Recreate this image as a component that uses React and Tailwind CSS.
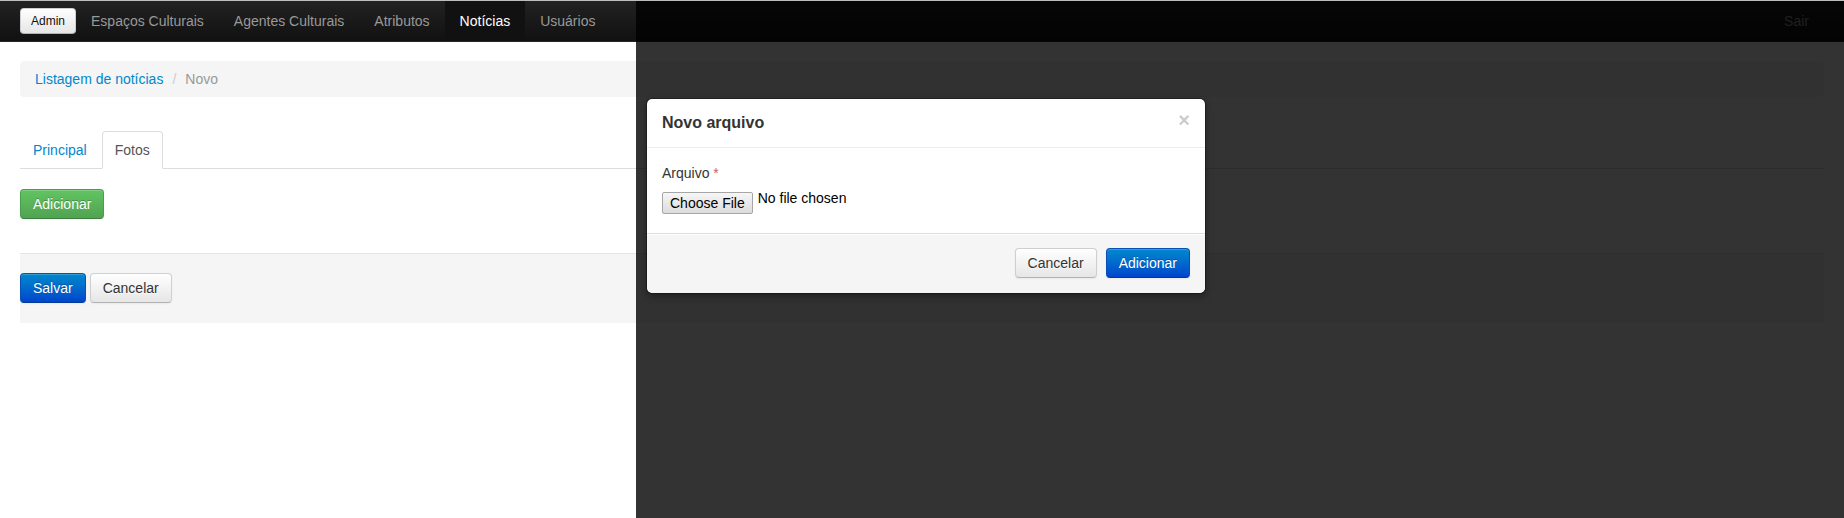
import React from 'react';

const btnBase =
  'inline-flex items-center justify-center h-[30px] px-3 rounded-[4px] border text-[14px] leading-5 cursor-pointer';

const variants = {
  default:
    'bg-linear-to-b from-white to-[#e6e6e6] border-[#cfcfcf] border-b-[#b3b3b3] text-[#333] shadow-[inset_0_1px_0_rgba(255,255,255,0.2),0_1px_2px_rgba(0,0,0,0.05)] [text-shadow:0_1px_1px_rgba(255,255,255,0.75)]',
  primary:
    'bg-linear-to-b from-[#0088cc] to-[#0044cc] border-[#0a4fb8] border-b-[#003a99] text-white shadow-[inset_0_1px_0_rgba(255,255,255,0.2),0_1px_2px_rgba(0,0,0,0.05)] [text-shadow:0_-1px_0_rgba(0,0,0,0.25)]',
  success:
    'bg-linear-to-b from-[#62c462] to-[#51a351] border-[#4d9c4d] border-b-[#3d7d3d] text-white shadow-[inset_0_1px_0_rgba(255,255,255,0.2),0_1px_2px_rgba(0,0,0,0.05)] [text-shadow:0_-1px_0_rgba(0,0,0,0.25)]',
};

const Btn = ({ variant = 'default', className = '', children }) => (
  <button type="button" className={`${btnBase} ${variants[variant]} ${className}`}>
    {children}
  </button>
);

const navItems = ['Espaços Culturais', 'Agentes Culturais', 'Atributos', 'Notícias', 'Usuários'];

const App = () => {
  return (
    <div className="relative h-[518px] overflow-hidden bg-white font-['Liberation_Sans',Arial,sans-serif] text-[14px] leading-5 text-[#333]">
      <div className="h-px bg-[#bdbdbd]" />

      {/* navbar */}
      <nav className="flex h-[41px] items-center border-b border-[#252525] bg-linear-to-b from-[#222] to-[#111] px-5">
        <button
          type="button"
          className="inline-flex h-[26px] items-center rounded-[4px] border border-[#cfcfcf] border-b-[#b3b3b3] bg-linear-to-b from-white to-[#e6e6e6] px-[10px] text-[12px] text-[#111]"
        >
          Admin
        </button>
        {navItems.map((item) => (
          <a
            key={item}
            className={`flex h-10 items-center px-[15px] ${
              item === 'Notícias' ? 'bg-[#111] text-white' : 'text-[#999]'
            }`}
          >
            {item}
          </a>
        ))}
        <a className="ml-auto flex h-10 items-center px-[15px] text-[#999]">Sair</a>
      </nav>

      <div className="px-5">
        {/* breadcrumb */}
        <div className="mt-[19px] flex h-9 items-center rounded-[4px] bg-[#f5f5f5] px-[15px]">
          <a className="text-[#0088cc]">Listagem de notícias</a>
          <span className="ml-1 px-[5px] text-[#ccc]">/</span>
          <span className="ml-1 text-[#999]">Novo</span>
        </div>

        {/* tabs */}
        <div className="mt-[34px] flex border-b border-[#ddd]">
          <a className="-mb-px mr-[2px] rounded-t-[4px] border border-transparent px-3 py-2 text-[#0088cc]">
            Principal
          </a>
          <a className="-mb-px rounded-t-[4px] border border-[#ddd] border-b-transparent bg-white px-3 py-2 text-[#555]">
            Fotos
          </a>
        </div>

        <div className="mt-5">
          <Btn variant="success">Adicionar</Btn>
        </div>

        {/* form actions */}
        <div className="mt-[34px] flex gap-1 border-t border-[#e5e5e5] bg-[#f5f5f5] pb-5 pt-[19px]">
          <Btn variant="primary">Salvar</Btn>
          <Btn>Cancelar</Btn>
        </div>
      </div>

      {/* backdrop */}
      <div className="absolute bottom-0 left-[636px] right-0 top-px bg-black/80" />

      {/* modal */}
      <div className="absolute left-[646px] top-[98px] w-[560px] rounded-[6px] border border-black/30 bg-white bg-clip-padding shadow-[0_3px_7px_rgba(0,0,0,0.3)]">
        <div className="flex justify-between border-b border-[#eee] px-[15px] py-[9px]">
          <h3 className="text-[16px] font-bold leading-[30px] text-[#333]">Novo arquivo</h3>
          <span className="mt-[2px] self-start text-[20px] font-bold leading-5 text-black opacity-20">×</span>
        </div>

        <div className="p-[15px]">
          <label className="mb-[5px] block leading-5">
            Arquivo <span className="text-[#c9625f]">*</span>
          </label>
          <div className="flex h-[30px] items-start">
            <span className="mt-1 inline-flex h-[22px] items-center rounded-[2px] border border-[#a6a6a6] bg-linear-to-b from-[#f6f6f6] to-[#dcdcdc] px-[7px] text-[14px] text-black">
              Choose File
            </span>
            <span className="ml-[5px] text-black">No file chosen</span>
          </div>
        </div>

        <div className="flex justify-end gap-[9px] rounded-b-[6px] border-t border-[#ddd] bg-[#f5f5f5] px-[15px] pb-[15px] pt-[14px] shadow-[inset_0_1px_0_#fff]">
          <Btn>Cancelar</Btn>
          <Btn variant="primary">Adicionar</Btn>
        </div>
      </div>
    </div>
  );
};

export default App;
